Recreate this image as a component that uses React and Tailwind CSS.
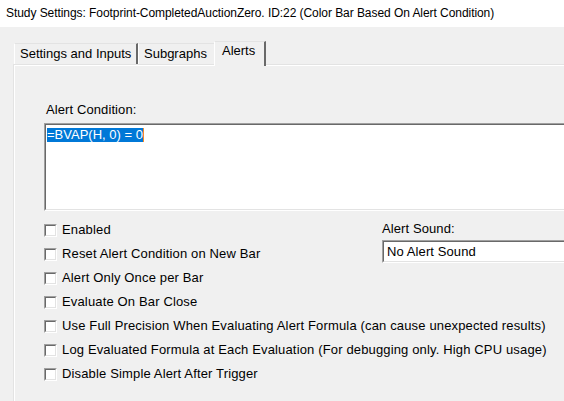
import React from "react";

function Check({ label }) {
  return (
    <div className="flex items-center h-[24px]">
      <div className="w-[13px] h-[13px] border border-t-[#a0a0a0] border-l-[#a0a0a0] border-b-white border-r-white shrink-0">
        <div className="w-full h-full border border-t-[#696969] border-l-[#696969] border-b-[#e3e3e3] border-r-[#e3e3e3] bg-white" />
      </div>
      <span className="ml-[5px] leading-[24px] whitespace-nowrap tracking-[0.15px]">{label}</span>
    </div>
  );
}

export default function App() {
  return (
    <div className="w-[564px] h-[401px] overflow-hidden bg-[#f0f0f0] text-black text-[13px] font-['Liberation_Sans',Arial,sans-serif]">
      <div className="h-[27px] bg-white flex items-center pl-[6px] pb-[1px] text-[12px] tracking-[-0.06px] whitespace-nowrap">
        Study Settings: Footprint-CompletedAuctionZero. ID:22 (Color Bar Based On Alert Condition)
      </div>
      <div className="pt-[14px] pl-[13px]">
        <div className="flex items-start h-[23px] pl-[1px] relative z-10">
          <div className="mt-[2px] h-[21px] w-[124px] shrink-0 border-t border-l border-r-2 border-t-[#e3e3e3] border-l-white border-r-[#696969] pl-[5px] leading-[19px] whitespace-nowrap">
            Settings and Inputs
          </div>
          <div className="mt-[2px] h-[21px] w-[78px] shrink-0 border-t border-l border-r-2 border-t-[#e3e3e3] border-l-white border-r-[#696969] pl-[5px] leading-[19px] whitespace-nowrap">
            Subgraphs
          </div>
          <div className="ml-[-2px] h-[25px] w-[52px] shrink-0 bg-[#f0f0f0] border-t border-l border-r-2 border-t-[#e3e3e3] border-l-white border-r-[#696969] pl-[7px] leading-[17px] whitespace-nowrap">
            Alerts
          </div>
        </div>
        <div className="border-t border-l border-[#e3e3e3] h-[400px]">
          <div className="border-t border-l border-white h-full pl-[29px] pt-[36px]">
            <div className="leading-[15px] whitespace-nowrap pl-[2px] tracking-[0.1px]">Alert Condition:</div>
            <div className="mt-[6px] w-[560px] h-[88px] border-t border-l border-t-[#a0a0a0] border-l-[#a0a0a0] border-b border-b-white">
              <div className="h-full border-t border-l border-t-[#696969] border-l-[#696969] border-b border-b-[#e3e3e3] bg-white pt-[3px] pl-[1px]">
                <div className="flex items-stretch h-[14px]">
                  <span className="bg-[#0078d7] text-white leading-[14px] whitespace-nowrap">=BVAP(H, 0) = 0</span>
                  <span className="w-[1px] bg-[#f78a28]" />
                </div>
              </div>
            </div>
            <div className="mt-[7px]">
              <div className="flex">
                <div className="w-[338px] shrink-0">
                  <Check label="Enabled" />
                  <Check label="Reset Alert Condition on New Bar" />
                </div>
                <div className="pt-[3px] shrink-0">
                  <div className="leading-[15px] whitespace-nowrap tracking-[0.1px]">Alert Sound:</div>
                  <div className="mt-[4px] w-[200px] h-[23px] border-t border-l border-t-[#a0a0a0] border-l-[#a0a0a0] border-b border-b-white">
                    <div className="h-full border-t border-l border-t-[#696969] border-l-[#696969] border-b border-b-[#e3e3e3] bg-white flex items-center pl-[3px]">
                      <span className="leading-[15px] whitespace-nowrap tracking-[0.1px]">No Alert Sound</span>
                    </div>
                  </div>
                </div>
              </div>
              <Check label="Alert Only Once per Bar" />
              <Check label="Evaluate On Bar Close" />
              <Check label="Use Full Precision When Evaluating Alert Formula (can cause unexpected results)" />
              <Check label="Log Evaluated Formula at Each Evaluation (For debugging only. High CPU usage)" />
              <Check label="Disable Simple Alert After Trigger" />
            </div>
          </div>
        </div>
      </div>
    </div>
  );
}
